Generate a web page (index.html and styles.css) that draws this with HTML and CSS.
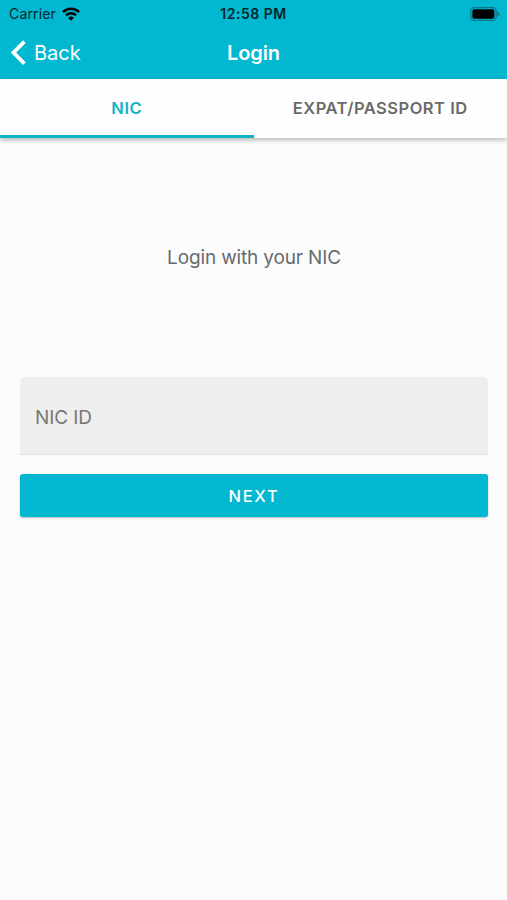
FILE: index.html
```
<!DOCTYPE html>
<html lang="en">
  <head>
    <meta charset="UTF-8" />
    <meta name="viewport" content="width=device-width, initial-scale=1.0" />
    <title>Login</title>
    <link rel="stylesheet" href="styles.css">
  </head>
  <body>
    <header class="header">
      <div class="status-bar">
        <div class="status-bar__left">
          <span class="carrier">Carrier</span>
          <svg class="wifi" viewBox="0 0 18 14" width="18" height="14">
            <g fill="none" stroke="#000" stroke-width="2.5">
              <path d="M1 5.1a11.4 11.4 0 0 1 16 0" />
              <path d="M4 8.4a7.1 7.1 0 0 1 10 0" />
            </g>
            <path d="M9 13.7 6.2 10.9a4 4 0 0 1 5.6 0z" />
          </svg>
        </div>
        <span class="clock">12:58 PM</span>
        <div class="status-bar__right">
          <svg class="battery" viewBox="0 0 30 14" width="30" height="14">
            <rect x="0.8" y="0.7" width="25.4" height="12.6" rx="3.5" fill="none" stroke="#067887" stroke-width="1.3" />
            <rect x="2.4" y="2.3" width="22" height="9.4" rx="1.8" />
            <path d="M27.6 4.7c2.4 1 2.4 3.6 0 4.6z" fill="#067887" />
          </svg>
        </div>
      </div>
      <nav class="navbar">
        <a class="back">
          <svg viewBox="0 0 17 26" width="17" height="26">
            <path d="M14.4 1.6 3.4 12.6l11 11" fill="none" stroke="#fff" stroke-width="3.8" />
          </svg>
          <span>Back</span>
        </a>
        <h1 class="title">Login</h1>
      </nav>
    </header>

    <div class="tabs">
      <button class="tab tab--active">NIC</button>
      <button class="tab">EXPAT/PASSPORT ID</button>
    </div>

    <main class="content">
      <p class="message">Login with your NIC</p>
      <form class="form">
        <input class="field" type="text" placeholder="NIC ID" aria-label="NIC ID" />
        <button class="next" type="button">NEXT</button>
      </form>
    </main>
  </body>
</html>
```

FILE: styles.css
```
* {
  box-sizing: border-box;
}

body {
  margin: 0;
  min-height: 100vh;
  font-family: Inter, "Liberation Sans", sans-serif;
  background: #fcfcfc;
}

button,
input {
  border: 0;
  font-family: inherit;
}

.header {
  height: 79px;
  background: #02b7d0;
}

.status-bar {
  display: grid;
  grid-template-columns: 1fr auto 1fr;
  align-items: center;
  height: 27px;
  padding: 0 7px;
  color: #05252b;
}

.status-bar__left {
  display: flex;
  align-items: center;
  gap: 6px;
  padding-left: 2px;
}

.status-bar__right {
  display: flex;
  justify-content: flex-end;
}

.carrier {
  font-size: 14px;
  line-height: 27px;
  letter-spacing: 0.15px;
}

.clock {
  font-size: 14px;
  font-weight: 600;
  letter-spacing: 0.5px;
}

.navbar {
  display: grid;
  grid-template-columns: 1fr auto 1fr;
  align-items: center;
  height: 52px;
  padding: 0 10px;
  color: #fff;
}

.back {
  display: flex;
  align-items: center;
  gap: 7px;
  font-size: 20px;
}

.title {
  margin: 0;
  font-size: 20px;
  font-weight: 600;
  letter-spacing: -0.1px;
}

.tabs {
  display: flex;
  height: 59px;
  background: #fefefe;
  box-shadow: 0 2px 5px rgba(0, 0, 0, 0.28);
}

.tab {
  flex: 1;
  padding: 2px 0 0;
  border-bottom: 3px solid transparent;
  background: none;
  color: #6a6a6a;
  font-size: 16.5px;
  font-weight: 600;
  letter-spacing: 0.5px;
}

.tab--active {
  border-bottom-color: #13b3c6;
  color: #13b3c6;
}

.content {
  padding: 108px 19px 0 20px;
}

.message {
  margin: 0;
  color: #666b70;
  font-size: 19px;
  line-height: 24px;
  letter-spacing: -0.15px;
  text-align: center;
}

.form {
  display: flex;
  flex-direction: column;
  gap: 19px;
  margin-top: 107px;
}

.field {
  height: 78px;
  padding: 4px 15px 0;
  border-bottom: 1px solid #e2e2e2;
  border-radius: 5px 5px 0 0;
  background: #eee;
  font-size: 19px;
  letter-spacing: -0.1px;
}

.field::placeholder {
  color: #777;
  opacity: 1;
}

.next {
  height: 43px;
  padding: 0;
  border-radius: 3px;
  background: #02b7d0;
  box-shadow: 0 1px 2px rgba(0, 0, 0, 0.25);
  color: #fff;
  font-size: 16.5px;
  font-weight: 500;
  letter-spacing: 1.7px;
}
```
